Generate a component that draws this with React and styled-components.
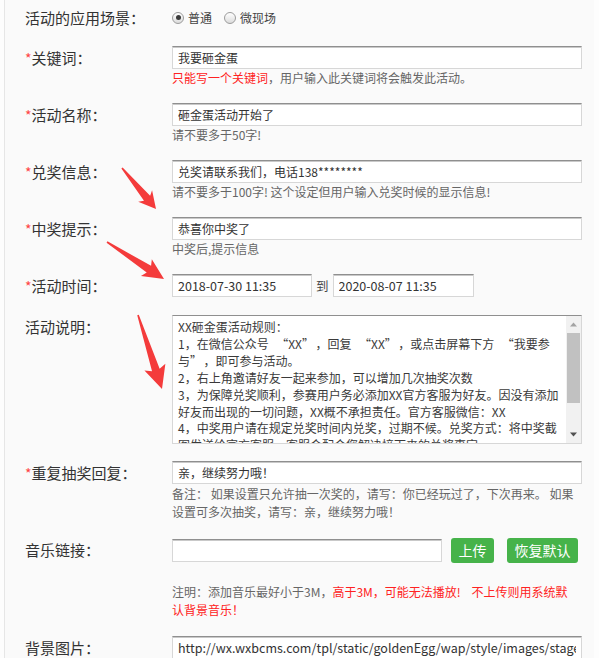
import React from "react"
import styled, { createGlobalStyle } from "styled-components"

const GlobalStyle = createGlobalStyle`
  html, body {
    margin: 0;
    padding: 0;
    background: #fdfdfd;
  }
  body {
    font-family: "Noto Sans CJK SC", "Liberation Sans", sans-serif;
    color: #333;
  }
`

const rules = `XX砸金蛋活动规则：
1，在微信公众号“XX”，回复“XX”，或点击屏幕下方“我要参与”，即可参与活动。
2，右上角邀请好友一起来参加，可以增加几次抽奖次数
3，为保障兑奖顺利，参赛用户务必添加XX官方客服为好友。因没有添加好友而出现的一切问题，XX概不承担责任。官方客服微信：XX
4，中奖用户请在规定兑奖时间内兑奖，过期不候。兑奖方式：将中奖截图发送给官方客服，客服会配合您解决接下来的兑奖事宜。`

// curly quotes take a full cell, like the original font shows them
const withQuotes = str =>
  str.split(/([“”])/).map((part, i) =>
    part === "“" || part === "”" ? (
      <Q key={i} $open={part === "“"}>
        {part}
      </Q>
    ) : (
      part
    )
  )

// tail -> tip, red marker arrows drawn over the form
const arrows = [
  { tail: [122, 168], tip: [156, 209], head: 17, wing: 9 },
  { tail: [107, 242], tip: [164, 279], head: 21, wing: 10 },
  { tail: [138, 315], tip: [162, 389], head: 23, wing: 11 },
]

const arrowPoints = ({ tail, tip, head, wing }) => {
  const dx = tip[0] - tail[0]
  const dy = tip[1] - tail[1]
  const len = Math.hypot(dx, dy)
  const ux = dx / len
  const uy = dy / len
  const nx = -uy
  const ny = ux
  const bx = tip[0] - ux * head
  const by = tip[1] - uy * head
  const nb = [bx + ux * 3, by + uy * 3]
  const pts = [
    [tail[0] + nx * 0.8, tail[1] + ny * 0.8],
    [nb[0] + nx * 4, nb[1] + ny * 4],
    [bx + nx * wing, by + ny * wing],
    tip,
    [bx - nx * wing, by - ny * wing],
    [nb[0] - nx * 4, nb[1] - ny * 4],
    [tail[0] - nx * 0.8, tail[1] - ny * 0.8],
  ]
  return pts.map(p => p.join(",")).join(" ")
}

const App = () => {
  return (
    <>
      <GlobalStyle />
      <Page>
        <Row>
          <Label>活动的应用场景：</Label>
          <RadioGroup>
            <RadioItem>
              <RadioDot $checked />
              普通
            </RadioItem>
            <RadioItem>
              <RadioDot />
              微现场
            </RadioItem>
          </RadioGroup>
        </Row>

        <Row>
          <Label>
            <Star>*</Star>关键词：
          </Label>
          <Field>
            <TextInput defaultValue="我要砸金蛋" />
            <Hint>
              <Red>只能写一个关键词</Red>，用户输入此关键词将会触发此活动。
            </Hint>
          </Field>
        </Row>

        <Row>
          <Label>
            <Star>*</Star>活动名称：
          </Label>
          <Field>
            <TextInput defaultValue="砸金蛋活动开始了" />
            <Hint>请不要多于50字!</Hint>
          </Field>
        </Row>

        <Row>
          <Label>
            <Star>*</Star>兑奖信息：
          </Label>
          <Field>
            <TextInput defaultValue="兑奖请联系我们，电话138********" />
            <Hint>请不要多于100字! 这个设定但用户输入兑奖时候的显示信息!</Hint>
          </Field>
        </Row>

        <Row>
          <Label>
            <Star>*</Star>中奖提示：
          </Label>
          <Field>
            <TextInput defaultValue="恭喜你中奖了" />
            <Hint>中奖后,提示信息</Hint>
          </Field>
        </Row>

        <Row>
          <Label>
            <Star>*</Star>活动时间：
          </Label>
          <DateRange>
            <TextInput $width={140} $size={12.5} defaultValue="2018-07-30 11:35" />
            <To>到</To>
            <TextInput $width={141} $size={12.5} defaultValue="2020-08-07 11:35" />
          </DateRange>
        </Row>

        <Row>
          <Label>活动说明：</Label>
          <RulesBox>
            <RulesText>{withQuotes(rules)}</RulesText>
            <ScrollBar>
              <ScrollArrow viewBox="0 0 15 17">
                <path d="M4 10.5 L7.5 6.5 L11 10.5 Z" fill="#a3a3a3" />
              </ScrollArrow>
              <ScrollTrack>
                <ScrollThumb />
              </ScrollTrack>
              <ScrollArrow viewBox="0 0 15 17">
                <path d="M4 6.5 L7.5 10.5 L11 6.5 Z" fill="#505050" />
              </ScrollArrow>
            </ScrollBar>
          </RulesBox>
        </Row>

        <Row>
          <Label>
            <Star>*</Star>重复抽奖回复：
          </Label>
          <Field>
            <TextInput defaultValue="亲，继续努力哦！" />
            <Note>
              备注： 如果设置只允许抽一次奖的，请写：你已经玩过了，下次再来。 如果设置可多次抽奖，请写：亲，继续努力哦！
            </Note>
          </Field>
        </Row>

        <Row>
          <Label>音乐链接：</Label>
          <Field>
            <ButtonLine>
              <TextInput $width={270} defaultValue="" />
              <GreenButton $width={43}>上传</GreenButton>
              <GreenButton $width={71}>恢复默认</GreenButton>
            </ButtonLine>
            <Note $top={20} $width={401}>
              注明：添加音乐最好小于3M，
              <Red>高于3M，可能无法播放!&nbsp;&nbsp;&nbsp;&nbsp;不上传则用系统默认背景音乐！</Red>
            </Note>
          </Field>
        </Row>

        <Row>
          <Label>背景图片：</Label>
          <Field>
            <TextInput
              $size={12.5}
              defaultValue="http://wx.wxbcms.com/tpl/static/goldenEgg/wap/style/images/stage.jpg"
            />
            <SmallGreen>上传</SmallGreen>
          </Field>
        </Row>

        <Overlay width="599" height="658" viewBox="0 0 599 658">
          {arrows.map((a, i) => (
            <polygon key={i} points={arrowPoints(a)} fill="#f43b3b" />
          ))}
        </Overlay>
      </Page>
    </>
  )
}
export default App

const Page = styled.div`
  position: relative;
  margin-left: 4px;
  width: 590px;
  min-height: 720px;
  box-sizing: border-box;
  border-left: 1px solid #e6e6e6;
  background: #fafafa;
  padding: 6px 0 40px 20px;
`
const Row = styled.div`
  display: grid;
  grid-template-columns: 147px 410px;
  align-items: start;
  margin-bottom: 17px;
`
const Label = styled.div`
  font-size: 15px;
  line-height: 23px;
  color: #333;
  white-space: nowrap;
`
const Star = styled.span`
  color: #f44;
  font-size: 14px;
`
const Field = styled.div`
  display: flex;
  flex-direction: column;
`
const TextInput = styled.input`
  box-sizing: border-box;
  width: ${props => (props.$width ? `${props.$width}px` : "410px")};
  height: 23px;
  margin: 0;
  padding: 0 5px;
  border: 1px solid #d7d7d7;
  border-top-color: #8f8f8f;
  box-shadow: inset 0 1px 0 #c9c9c9;
  background: #fff;
  font-family: "Noto Sans CJK SC", "Liberation Sans", sans-serif;
  font-size: ${props => (props.$size ? `${props.$size}px` : "12px")};
  color: #333;
  outline: none;
`
const Hint = styled.div`
  font-size: 12px;
  line-height: 17px;
  color: #666;
  white-space: nowrap;
`
const Note = styled.div`
  width: ${props => (props.$width ? `${props.$width}px` : "auto")};
  margin-top: ${props => (props.$top ? `${props.$top}px` : "1px")};
  font-size: 12px;
  line-height: 18px;
  color: #666;
`
const Red = styled.span`
  color: #f22;
`
const RadioGroup = styled.div`
  display: flex;
  align-items: center;
  gap: 12px;
  height: 23px;
`
const RadioItem = styled.label`
  display: flex;
  align-items: center;
  gap: 4px;
  font-size: 12px;
  color: #444;
`
const RadioDot = styled.span`
  position: relative;
  width: 12px;
  height: 12px;
  box-sizing: border-box;
  border-radius: 50%;
  border: 1px solid #9c9c9c;
  background: linear-gradient(#ffffff, #dcdcdc);
  &::after {
    content: "";
    display: ${props => (props.$checked ? "block" : "none")};
    position: absolute;
    left: 2.5px;
    top: 2.5px;
    width: 5px;
    height: 5px;
    border-radius: 50%;
    background: #3a3a3a;
  }
`
const DateRange = styled.div`
  display: flex;
  align-items: center;
  gap: 4px;
`
const To = styled.span`
  font-size: 12.5px;
  color: #444;
`
const RulesBox = styled.div`
  display: flex;
  box-sizing: border-box;
  width: 410px;
  height: 129px;
  border: 1px solid #d7d7d7;
  border-top-color: #8f8f8f;
  background: #fff;
`
const RulesText = styled.div`
  flex: 1;
  padding: 3px 6px 0 5px;
  overflow: hidden;
  white-space: pre-wrap;
  font-size: 12px;
  line-height: 16.9px;
  color: #3a3a3a;
`
const Q = styled.span`
  padding-left: ${props => (props.$open ? "7.5px" : "0")};
  padding-right: ${props => (props.$open ? "0" : "7.5px")};
`
const ScrollBar = styled.div`
  display: flex;
  flex-direction: column;
  width: 15px;
  background: #f1f1f1;
`
const ScrollArrow = styled.svg`
  display: block;
  width: 15px;
  height: 17px;
  flex: none;
`
const ScrollTrack = styled.div`
  flex: 1;
  padding: 0 1px;
`
const ScrollThumb = styled.div`
  height: 70px;
  background: #c1c1c1;
`
const ButtonLine = styled.div`
  display: flex;
  align-items: center;
  & > button:nth-of-type(1) {
    margin-left: 9px;
  }
  & > button:nth-of-type(2) {
    margin-left: 13px;
  }
`
const GreenButton = styled.button`
  width: ${props => `${props.$width}px`};
  height: 25px;
  padding: 0;
  border: none;
  border-radius: 3px;
  background: #46b34a;
  color: #fff;
  font-family: "Noto Sans CJK SC", sans-serif;
  font-size: 14px;
  line-height: 25px;
`
const SmallGreen = styled.button`
  align-self: flex-start;
  width: 43px;
  height: 25px;
  margin: 1px 0 0 5px;
  padding: 0;
  border: none;
  border-radius: 3px;
  background: #46b34a;
  color: #fff;
  font-family: "Noto Sans CJK SC", sans-serif;
  font-size: 14px;
`
const Overlay = styled.svg`
  position: absolute;
  left: -5px;
  top: 0;
  pointer-events: none;
`
